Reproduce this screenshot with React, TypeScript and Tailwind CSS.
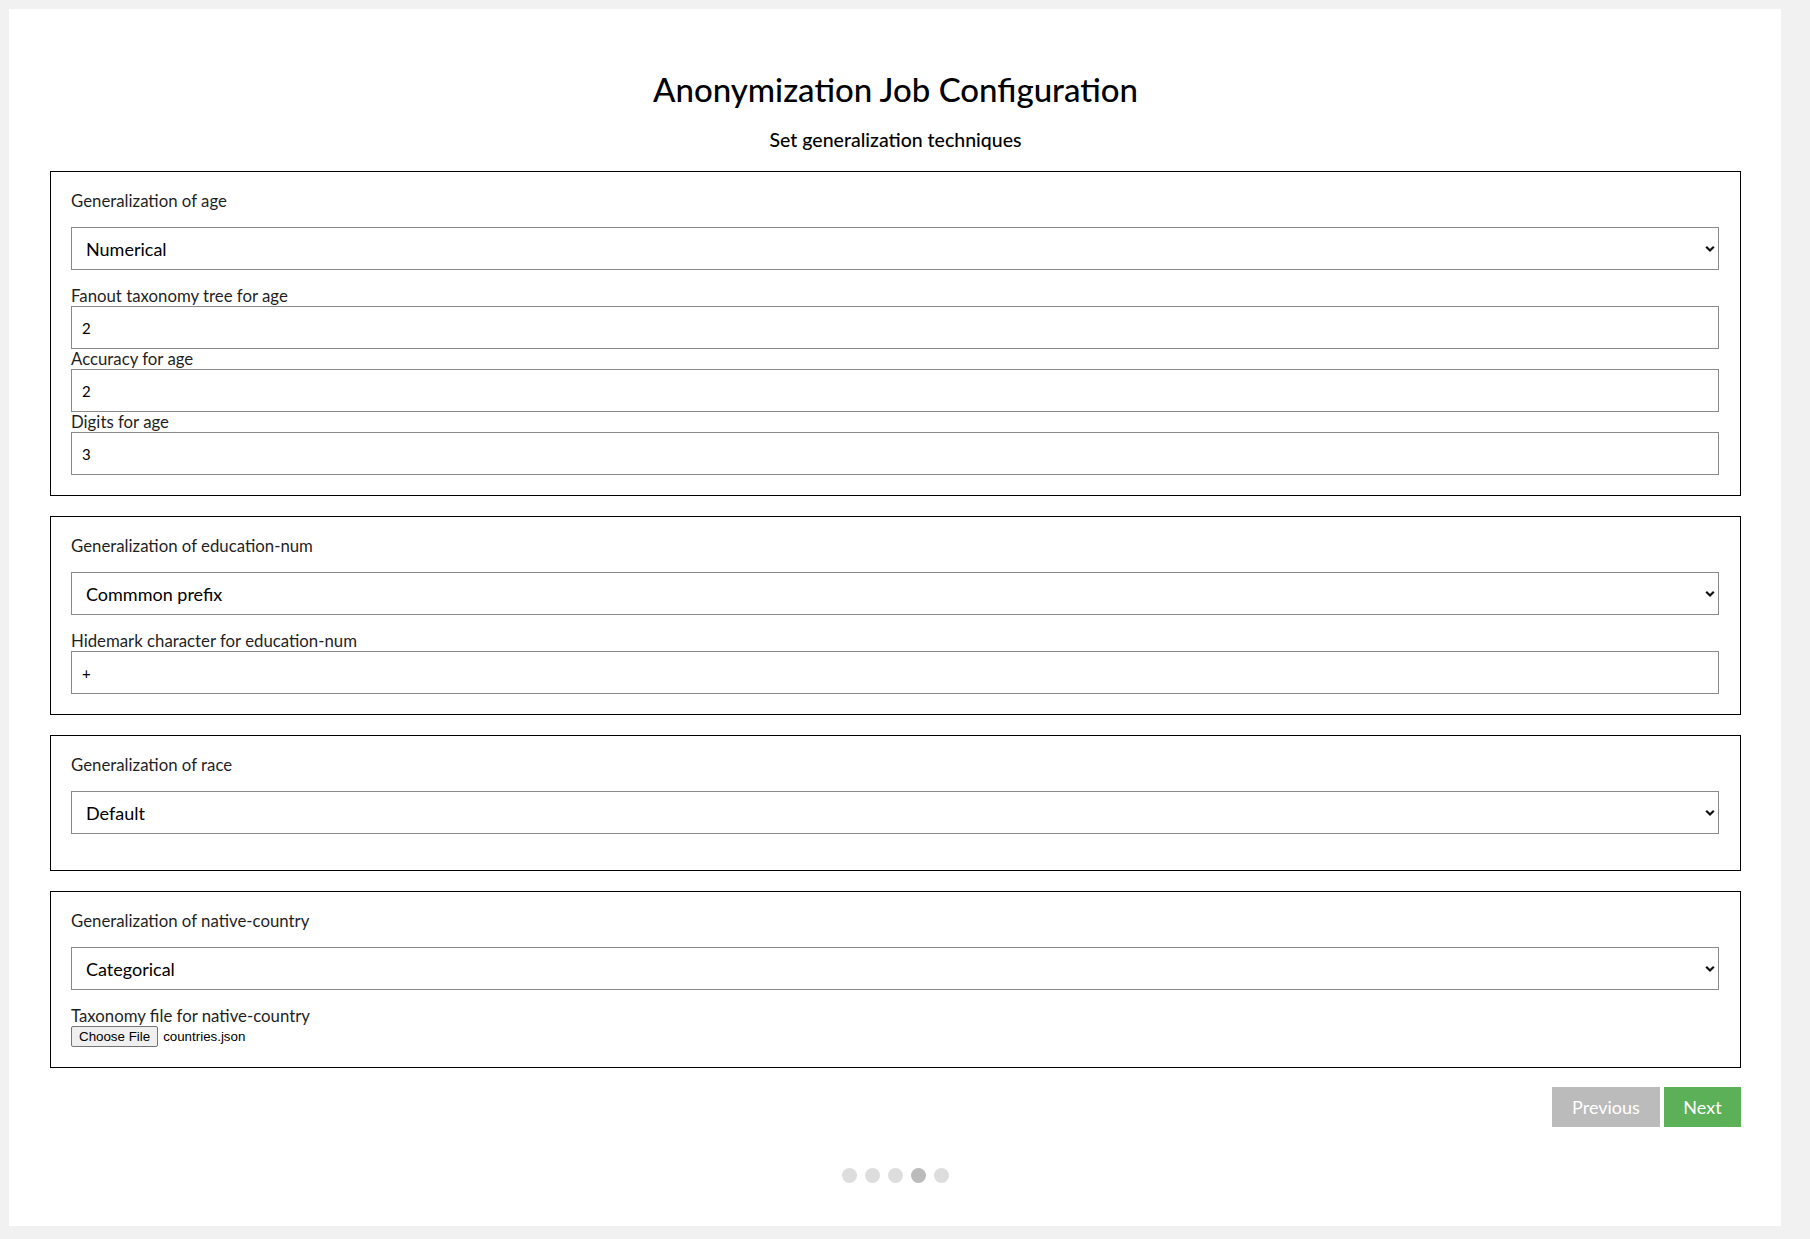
import React from "react";

const Chevron = () => (
  <svg
    className="pointer-events-none absolute right-[4px] top-1/2 -translate-y-1/2"
    width="10"
    height="7"
    viewBox="0 0 10 7"
  >
    <path d="M1.2 1.2 L5 5 L8.8 1.2" fill="none" stroke="#111" strokeWidth="2.2" />
  </svg>
);

function Select({ value }: { value: string }) {
  return (
    <div className="relative h-[43px] w-full">
      <select
        defaultValue={value}
        className="h-[43px] w-full appearance-none border border-[#8a8a8a] bg-white pl-[14px] pr-8 text-[18px] leading-[20px] text-black outline-none"
      >
        <option>{value}</option>
      </select>
      <Chevron />
    </div>
  );
}

function Field({ label, value }: { label: string; value: string }) {
  return (
    <div className="flex flex-col">
      <label className="h-[20px] text-[16.8px] leading-[20px] text-[#1f1f1f]">{label}</label>
      <input
        defaultValue={value}
        className="h-[43px] w-full border border-[#8a8a8a] bg-white px-[10px] text-[15px] text-black outline-none"
      />
    </div>
  );
}

function Box({ title, value, children }: { title: string; value: string; children?: React.ReactNode }) {
  return (
    <div className="border border-black pb-[20px] pl-[20px] pr-[21px] pt-[19px]">
      <div className="h-[20px] text-[16.8px] leading-[20px] text-[#1f1f1f]">{title}</div>
      <div className="mt-4">
        <Select value={value} />
      </div>
      <div className="mt-4 flex flex-col">{children}</div>
    </div>
  );
}

export default function App() {
  return (
    <div className="min-h-screen bg-[#f1f1f1] pb-[15px] pl-[9px] pr-[29px] pt-[9px] font-['Lato','Open_Sans',sans-serif]">
      <div className="bg-white pb-[43px] pl-[41px] pr-[40px] pt-[40px]">
        <h1 className="mb-[21px] mt-[21px] text-center text-[33px] font-medium leading-[38px] text-black">
          Anonymization Job Configuration
        </h1>
        <h3 className="mb-[20px] text-center text-[19.5px] font-medium leading-[22px] text-black">
          Set generalization techniques
        </h3>
        <div className="flex flex-col gap-5">
          <Box title="Generalization of age" value="Numerical">
            <Field label="Fanout taxonomy tree for age" value="2" />
            <Field label="Accuracy for age" value="2" />
            <Field label="Digits for age" value="3" />
          </Box>
          <Box title="Generalization of education-num" value="Commmon prefix">
            <Field label="Hidemark character for education-num" value="+" />
          </Box>
          <div className="border border-black pb-[20px] pl-[20px] pr-[21px] pt-[19px]">
            <div className="h-[20px] text-[16.8px] leading-[20px] text-[#1f1f1f]">Generalization of race</div>
            <div className="mt-4">
              <Select value="Default" />
            </div>
            <div className="h-4" />
          </div>
          <Box title="Generalization of native-country" value="Categorical">
            <div className="h-[20px] text-[16.8px] leading-[20px] text-[#1f1f1f]">Taxonomy file for native-country</div>
            <div className="flex h-[21px] items-center font-['Liberation_Sans',Arial,sans-serif] text-[13.33px] text-black">
              <span className="mr-[5px] flex h-[21px] items-center rounded-[2px] border border-[#767676] bg-[#efefef] px-[7px]">
                Choose File
              </span>
              <span>countries.json</span>
            </div>
          </Box>
        </div>
        <div className="mt-[19px] flex justify-end gap-[4px]">
          <button className="h-[40px] w-[108px] bg-[#bbbbbb] text-[18px] text-white">Previous</button>
          <button className="h-[40px] w-[77px] bg-[#5cb058] text-[18px] text-white">Next</button>
        </div>
        <div className="mt-[41px] flex justify-center gap-[8px]">
          <span className="h-[15px] w-[15px] rounded-full bg-[#bbbbbb] opacity-50" />
          <span className="h-[15px] w-[15px] rounded-full bg-[#bbbbbb] opacity-50" />
          <span className="h-[15px] w-[15px] rounded-full bg-[#bbbbbb] opacity-50" />
          <span className="h-[15px] w-[15px] rounded-full bg-[#bbbbbb]" />
          <span className="h-[15px] w-[15px] rounded-full bg-[#bbbbbb] opacity-50" />
        </div>
      </div>
    </div>
  );
}
